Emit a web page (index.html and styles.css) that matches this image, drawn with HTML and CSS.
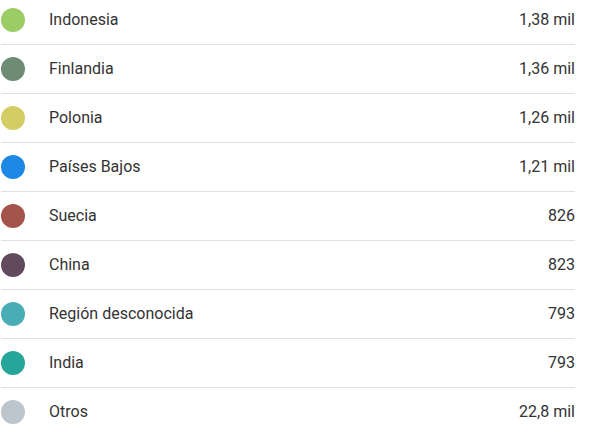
FILE: index.html
```html
<!DOCTYPE html>
<html lang="es">
<head>
<meta charset="utf-8">
<link rel="stylesheet" href="styles.css">
</head>
<body>
<ul class="list">
  <li class="row"><span class="dot c1"></span><span class="name">Indonesia</span><span class="val">1,38 mil</span></li>
  <li class="row"><span class="dot c2"></span><span class="name">Finlandia</span><span class="val">1,36 mil</span></li>
  <li class="row"><span class="dot c3"></span><span class="name">Polonia</span><span class="val">1,26 mil</span></li>
  <li class="row"><span class="dot c4"></span><span class="name">Países Bajos</span><span class="val">1,21 mil</span></li>
  <li class="row"><span class="dot c5"></span><span class="name">Suecia</span><span class="val">826</span></li>
  <li class="row"><span class="dot c6"></span><span class="name">China</span><span class="val">823</span></li>
  <li class="row"><span class="dot c7"></span><span class="name">Región desconocida</span><span class="val">793</span></li>
  <li class="row"><span class="dot c8"></span><span class="name">India</span><span class="val">793</span></li>
  <li class="row last"><span class="dot c9"></span><span class="name">Otros</span><span class="val">22,8 mil</span></li>
</ul>
</body>
</html>
```
FILE: styles.css
```css
html, body {
  margin: 0;
  padding: 0;
  background: #ffffff;
}
.list {
  list-style: none;
  margin: -4px 0 0 1px;
  padding: 0;
  width: 574px;
  font-family: Roboto, "Liberation Sans", sans-serif;
  font-size: 16px;
  color: #333333;
}
.row {
  display: flex;
  align-items: center;
  height: 48px;
  border-bottom: 1px solid #e0e0e0;
}
.row.last {
  border-bottom: none;
}
.dot {
  width: 24px;
  height: 24px;
  border-radius: 50%;
  flex: none;
  margin-right: 24px;
}
.name {
  flex: 1;
  margin-bottom: 2px;
}
.val {
  text-align: right;
  margin-bottom: 2px;
}
.c1 { background: #9ccc65; }
.c2 { background: #6e8b74; }
.c3 { background: #d4cd64; }
.c4 { background: #1e88e5; }
.c5 { background: #a5544b; }
.c6 { background: #624a5e; }
.c7 { background: #48adb5; }
.c8 { background: #26a69a; }
.c9 { background: #bdc6cc; }
```
